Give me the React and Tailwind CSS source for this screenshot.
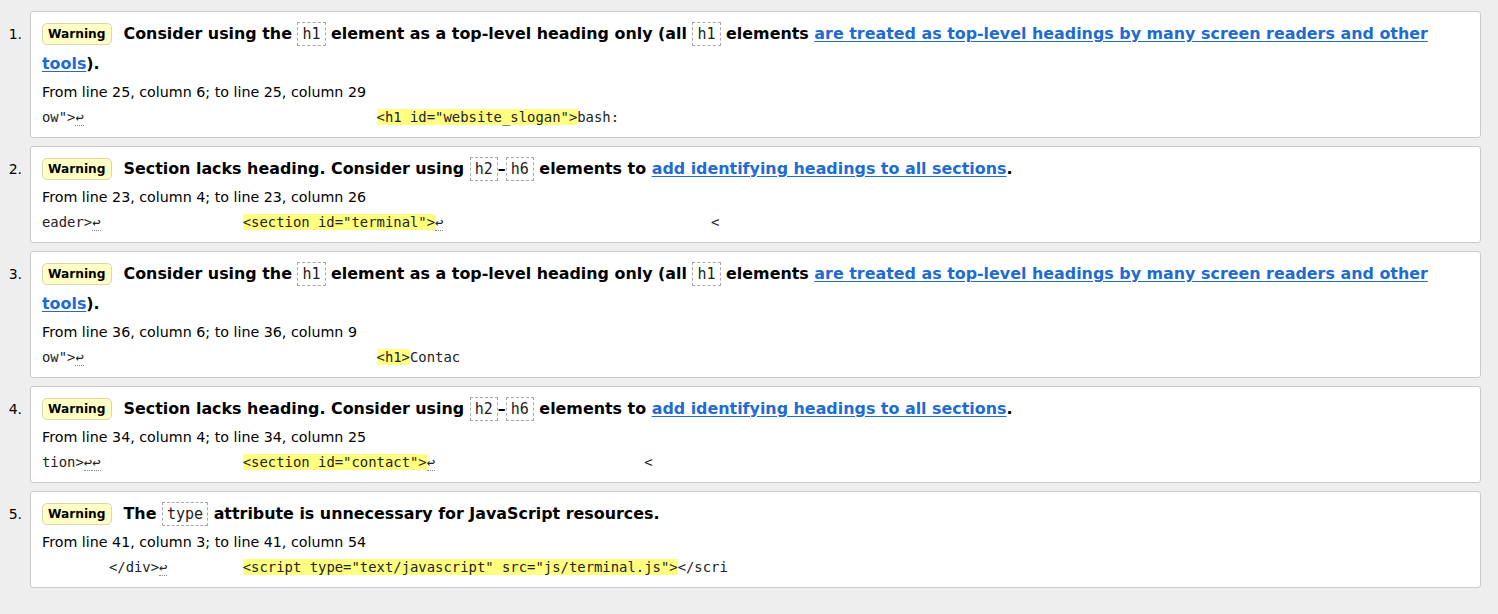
import React from 'react';

const sp = (n) => ' '.repeat(n);

const messages = [
    {
        parts: [
            'Consider using the ', { code: 'h1' }, ' element as a top-level heading only (all ', { code: 'h1' }, ' elements ',
            { link: 'are treated as top-level headings by many screen readers and other tools' }, ').',
        ],
        location: 'From line 25, column 6; to line 25, column 29',
        extract: [['t', 'ow">'], ['lf'], ['t', sp(35)], ['hl', '<h1 id="website_slogan">'], ['t', 'bash:']],
    },
    {
        parts: ['Section lacks heading. Consider using ', { code: 'h2' }, '–', { code: 'h6' }, ' elements to ', { link: 'add identifying headings to all sections' }, '.'],
        location: 'From line 23, column 4; to line 23, column 26',
        extract: [['t', 'eader>'], ['lf'], ['t', sp(17)], ['hl', '<section id="terminal">'], ['lf'], ['t', sp(32) + '<']],
    },
    {
        parts: [
            'Consider using the ', { code: 'h1' }, ' element as a top-level heading only (all ', { code: 'h1' }, ' elements ',
            { link: 'are treated as top-level headings by many screen readers and other tools' }, ').',
        ],
        location: 'From line 36, column 6; to line 36, column 9',
        extract: [['t', 'ow">'], ['lf'], ['t', sp(35)], ['hl', '<h1>'], ['t', 'Contac']],
    },
    {
        parts: ['Section lacks heading. Consider using ', { code: 'h2' }, '–', { code: 'h6' }, ' elements to ', { link: 'add identifying headings to all sections' }, '.'],
        location: 'From line 34, column 4; to line 34, column 25',
        extract: [['t', 'tion>'], ['lf'], ['lf'], ['t', sp(17)], ['hl', '<section id="contact">'], ['lf'], ['t', sp(25) + '<']],
    },
    {
        parts: ['The ', { code: 'type' }, ' attribute is unnecessary for JavaScript resources.'],
        location: 'From line 41, column 3; to line 41, column 54',
        extract: [['t', sp(8) + '</div>'], ['lf'], ['t', sp(9)], ['hl', '<script type="text/javascript" src="js/terminal.js">'], ['t', '</scri']],
    },
];

const Part = ({ p }) => {
    if (typeof p === 'string') return p;
    if (p.code)
        return (
            <code className="inline-block border border-dashed border-[#a8a8a8] px-[4px] font-['DejaVu_Sans_Mono',monospace] text-[15px] font-normal leading-[22px] text-[#222]">
                {p.code}
            </code>
        );
    return (
        <a href="#" className="text-[#1f6bd0] underline underline-offset-[2px]">
            {p.link}
        </a>
    );
};

const Extract = ({ segs }) => (
    <code className="block whitespace-pre font-['DejaVu_Sans_Mono',monospace] text-[13.9px] leading-[24px] text-[#222]">
        {segs.map(([kind, text], i) => {
            if (kind === 'lf')
                return (
                    <span key={i} title="Line break" className="border-b border-dotted border-[#888]">
                        ↩
                    </span>
                );
            if (kind === 'hl')
                return (
                    <span key={i} className="bg-[#ffff80]">
                        {text}
                    </span>
                );
            return <span key={i}>{text}</span>;
        })}
    </code>
);

export default function App() {
    return (
        <div className="min-h-screen bg-[#eeeeee] pt-[11px] pb-6 pr-[17px] font-['DejaVu_Sans',sans-serif] text-black">
            <ol className="flex flex-col gap-[8px]">
                {messages.map((m, i) => (
                    <li key={i} className="flex items-baseline">
                        <span className="w-[30px] shrink-0 pr-[8px] text-right text-[14px]">{i + 1}.</span>
                        <div className="flex-1 rounded-[3px] border border-[#cacaca] bg-white px-[11px] pt-[7px] pb-[8px]">
                            <p className="text-[15.9px] font-bold leading-[30px]">
                                <span className="mr-[12px] inline-block rounded-[5px] border border-[#d6d6b0] bg-[#ffffc4] px-[5px] align-[1px] text-[12.2px] font-bold leading-[20px]">
                                    Warning
                                </span>
                                {m.parts.map((p, j) => (
                                    <Part key={j} p={p} />
                                ))}
                            </p>
                            <p className="text-[14.25px] leading-[26px]">{m.location}</p>
                            <Extract segs={m.extract} />
                        </div>
                    </li>
                ))}
            </ol>
        </div>
    );
}
